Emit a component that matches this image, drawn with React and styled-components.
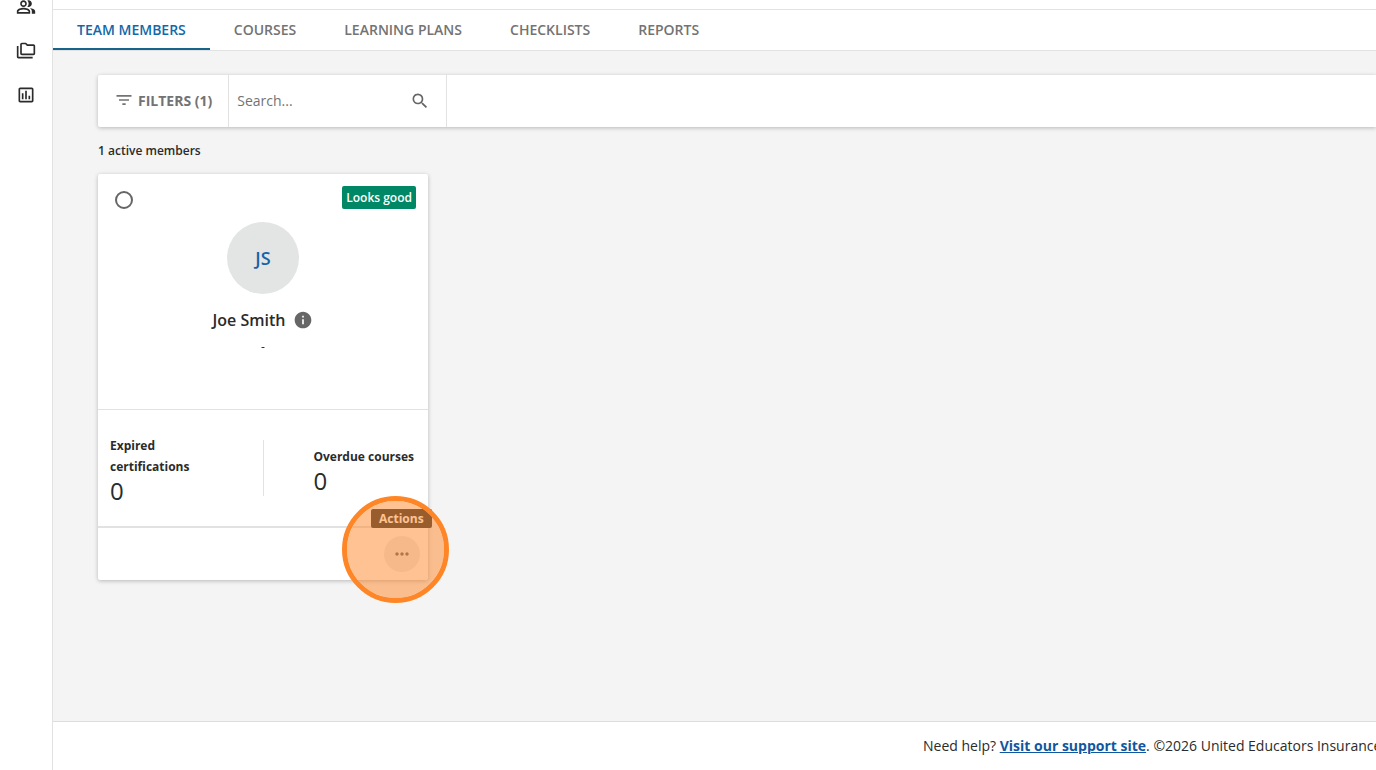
import React, { useState } from "react";
import styled, { createGlobalStyle } from "styled-components";
import {
  MdFilterList,
  MdInfo,
  MdMoreHoriz,
  MdOutlineFolderCopy,
  MdOutlineInsertChart,
  MdOutlinePeopleAlt,
  MdSearch,
} from "react-icons/md";

const GlobalStyle = createGlobalStyle`
  * {
    box-sizing: border-box;
  }

  body {
    margin: 0;
    font-family: "Open Sans", "Noto Sans", sans-serif;
    font-size: 14px;
    color: #2b2b2b;
    background-color: #ffffff;
    overflow-x: hidden;
  }

  button,
  input {
    font-family: inherit;
  }
`;

const Page = styled.div`
  display: flex;
  min-height: 100vh;
`;

const Sidebar = styled.nav`
  display: flex;
  flex-direction: column;
  align-items: center;
  flex: 0 0 53px;
  gap: 24px;
  border-right: 1px solid #e2e2e2;
  overflow: hidden;
`;

const SidebarLink = styled.a`
  display: flex;
  color: #2b2b2b;
  font-size: 20px;

  &:first-child {
    margin-top: -3px;
  }
`;

const Content = styled.div`
  display: flex;
  flex-direction: column;
  flex: 1;
  min-width: 0;
`;

const Header = styled.header`
  height: 10px;
  border-bottom: 1px solid #e2e2e2;
`;

const Tabs = styled.nav`
  display: flex;
  height: 41px;
  border-bottom: 1px solid #e2e2e2;
`;

const Tab = styled.a`
  display: flex;
  align-items: center;
  padding: 0 24px;
  border-top: 1px solid transparent;
  font-weight: 600;
  text-decoration: none;
  text-transform: uppercase;
  color: ${(props) => (props.$active ? "#1268a8" : "#737373")};
  border-bottom: 2px solid
    ${(props) => (props.$active ? "#17638c" : "transparent")};
`;

const Main = styled.main`
  flex: 1;
  padding: 24px 0 24px 45px;
  background-color: #f4f4f4;
`;

const Toolbar = styled.div`
  display: flex;
  height: 52px;
  background-color: #ffffff;
  border-radius: 2px 0 0 2px;
  box-shadow: 0 1px 4px rgba(0, 0, 0, 0.25);
`;

const FilterButton = styled.button`
  display: flex;
  align-items: center;
  gap: 4px;
  padding: 0 16px 2px;
  border: none;
  border-right: 1px solid #e2e2e2;
  background-color: transparent;
  color: #737373;
  font-size: 14px;
  font-weight: 700;
  cursor: pointer;

  svg {
    font-size: 20px;
  }
`;

const SearchBox = styled.form`
  display: flex;
  align-items: center;
  width: 218px;
  padding: 0 16px 0 8px;
  border-right: 1px solid #e2e2e2;
`;

const SearchInput = styled.input`
  flex: 1;
  min-width: 0;
  padding: 0 0 2px;
  border: none;
  outline: none;
  background-color: transparent;
  font-size: 14px;

  &::placeholder {
    color: #737373;
  }
`;

const SearchButton = styled.button`
  display: flex;
  padding: 0;
  border: none;
  background-color: transparent;
  color: #666666;
  font-size: 20px;
  cursor: pointer;
`;

const Count = styled.p`
  margin: 12px 0;
  font-size: 12px;
  font-weight: 600;
  line-height: 23px;
`;

const Card = styled.article`
  width: 330px;
  background-color: #ffffff;
  border-radius: 2px;
  box-shadow: 0 1px 4px rgba(0, 0, 0, 0.25);
`;

const Profile = styled.div`
  display: flex;
  flex-direction: column;
  align-items: center;
  height: 236px;
  padding: 12px;
  border-bottom: 1px solid #e2e2e2;
`;

const ProfileTop = styled.div`
  display: flex;
  justify-content: space-between;
  align-items: flex-start;
  width: 100%;
  height: 36px;
`;

const Radio = styled.input`
  appearance: none;
  width: 18px;
  height: 18px;
  margin: 5px;
  border: 2px solid #666666;
  border-radius: 50%;

  &:checked {
    box-shadow: inset 0 0 0 3px #ffffff;
    background-color: #1268a8;
  }
`;

const Badge = styled.span`
  padding: 0 4px;
  border-radius: 2px;
  background-color: #008765;
  color: #ffffff;
  font-size: 12px;
  font-weight: 600;
  line-height: 23px;
`;

const Avatar = styled.div`
  display: flex;
  align-items: center;
  justify-content: center;
  width: 72px;
  height: 72px;
  border-radius: 50%;
  background-color: #e3e5e5;
  color: #1763a6;
  font-size: 18px;
  font-weight: 600;
`;

const NameRow = styled.div`
  display: flex;
  align-items: center;
  gap: 8px;
  margin-top: 14px;

  svg {
    color: #666666;
    font-size: 20px;
  }
`;

const Name = styled.h2`
  margin: 0;
  font-size: 16px;
  font-weight: 600;
  line-height: 24px;
`;

const Subtitle = styled.p`
  margin: 5px 0;
  font-size: 12px;
  line-height: 20px;
`;

const Stats = styled.div`
  display: flex;
  align-items: center;
  height: 118px;
  border-bottom: 2px solid #e2e2e2;
`;

const StatCell = styled.div`
  display: flex;
  flex: 1;
  justify-content: ${(props) => (props.$end ? "flex-end" : "flex-start")};
  padding: 4px 14px 0 12px;
`;

const Stat = styled.div`
  max-width: 104px;
`;

const StatLabel = styled.div`
  font-size: 12px;
  font-weight: 700;
  line-height: 21px;
`;

const StatValue = styled.div`
  font-size: 24px;
  line-height: 28px;
`;

const Divider = styled.div`
  width: 1px;
  height: 56px;
  background-color: #e2e2e2;
`;

const CardFooter = styled.div`
  display: flex;
  justify-content: flex-end;
  padding: 8px;
`;

const ActionsWrap = styled.div`
  position: relative;
`;

const ActionsButton = styled.button`
  display: flex;
  align-items: center;
  justify-content: center;
  width: 36px;
  height: 36px;
  padding: 0;
  border: none;
  border-radius: 50%;
  background-color: #ededed;
  color: #666666;
  font-size: 20px;
  cursor: pointer;
`;

const Tooltip = styled.span`
  position: absolute;
  top: -27px;
  left: -13px;
  padding: 0 8px;
  border-radius: 2px;
  background-color: #333333;
  color: #ffffff;
  font-size: 12px;
  font-weight: 700;
  line-height: 19px;
`;

const Highlight = styled.span`
  position: absolute;
  top: -40px;
  left: -42px;
  width: 107px;
  height: 107px;
  border: 5px solid #ff8626;
  border-radius: 50%;
  background-color: rgba(255, 134, 38, 0.5);
  background-clip: padding-box;
  pointer-events: none;
`;

const Footer = styled.footer`
  display: flex;
  justify-content: flex-end;
  height: 49px;
  border-top: 1px solid #dddddd;
  line-height: 48px;
  overflow: hidden;
`;

const FooterText = styled.div`
  flex: 0 0 453px;
  min-width: 0;
  white-space: nowrap;
`;

const SupportLink = styled.a`
  color: #0f57a0;
  font-weight: 700;
`;

const navItems = [
  { label: "People", icon: MdOutlinePeopleAlt },
  { label: "Library", icon: MdOutlineFolderCopy },
  { label: "Reports", icon: MdOutlineInsertChart },
];

const tabs = [
  "Team members",
  "Courses",
  "Learning plans",
  "Checklists",
  "Reports",
];

const MemberCard = ({ member }) => (
  <Card>
    <Profile>
      <ProfileTop>
        <Radio
          type="radio"
          name="member"
          aria-label={`Select ${member.name}`}
        />
        <Badge>{member.status}</Badge>
      </ProfileTop>
      <Avatar>{member.initials}</Avatar>
      <NameRow>
        <Name>{member.name}</Name>
        <MdInfo />
      </NameRow>
      <Subtitle>-</Subtitle>
    </Profile>
    <Stats>
      <StatCell>
        <Stat>
          <StatLabel>Expired certifications</StatLabel>
          <StatValue>{member.expired}</StatValue>
        </Stat>
      </StatCell>
      <Divider />
      <StatCell $end>
        <Stat>
          <StatLabel>Overdue courses</StatLabel>
          <StatValue>{member.overdue}</StatValue>
        </Stat>
      </StatCell>
    </Stats>
    <CardFooter>
      <ActionsWrap>
        <ActionsButton type="button" aria-label="Actions">
          <MdMoreHoriz />
        </ActionsButton>
        <Tooltip role="tooltip">Actions</Tooltip>
        <Highlight />
      </ActionsWrap>
    </CardFooter>
  </Card>
);

const App = () => {
  const [search, setSearch] = useState("");

  const members = [
    {
      name: "Joe Smith",
      initials: "JS",
      status: "Looks good",
      expired: 0,
      overdue: 0,
    },
  ];

  return (
    <>
      <GlobalStyle />
      <Page>
        <Sidebar>
          {navItems.map(({ label, icon: Icon }) => (
            <SidebarLink key={label} href="#" aria-label={label}>
              <Icon />
            </SidebarLink>
          ))}
        </Sidebar>
        <Content>
          <Header />
          <Tabs>
            {tabs.map((tab, index) => (
              <Tab key={tab} href="#" $active={index === 0}>
                {tab}
              </Tab>
            ))}
          </Tabs>
          <Main>
            <Toolbar>
              <FilterButton type="button">
                <MdFilterList />
                FILTERS (1)
              </FilterButton>
              <SearchBox onSubmit={(e) => e.preventDefault()}>
                <SearchInput
                  type="text"
                  aria-label="Search"
                  placeholder="Search..."
                  value={search}
                  onChange={(e) => setSearch(e.target.value)}
                />
                <SearchButton type="submit" aria-label="Search">
                  <MdSearch />
                </SearchButton>
              </SearchBox>
            </Toolbar>
            <Count>{members.length} active members</Count>
            {members.map((member) => (
              <MemberCard key={member.name} member={member} />
            ))}
          </Main>
          <Footer>
            <FooterText>
              Need help? <SupportLink href="#">Visit our support site</SupportLink>
              . ©2026 United Educators Insurance
            </FooterText>
          </Footer>
        </Content>
      </Page>
    </>
  );
};

export default App;
